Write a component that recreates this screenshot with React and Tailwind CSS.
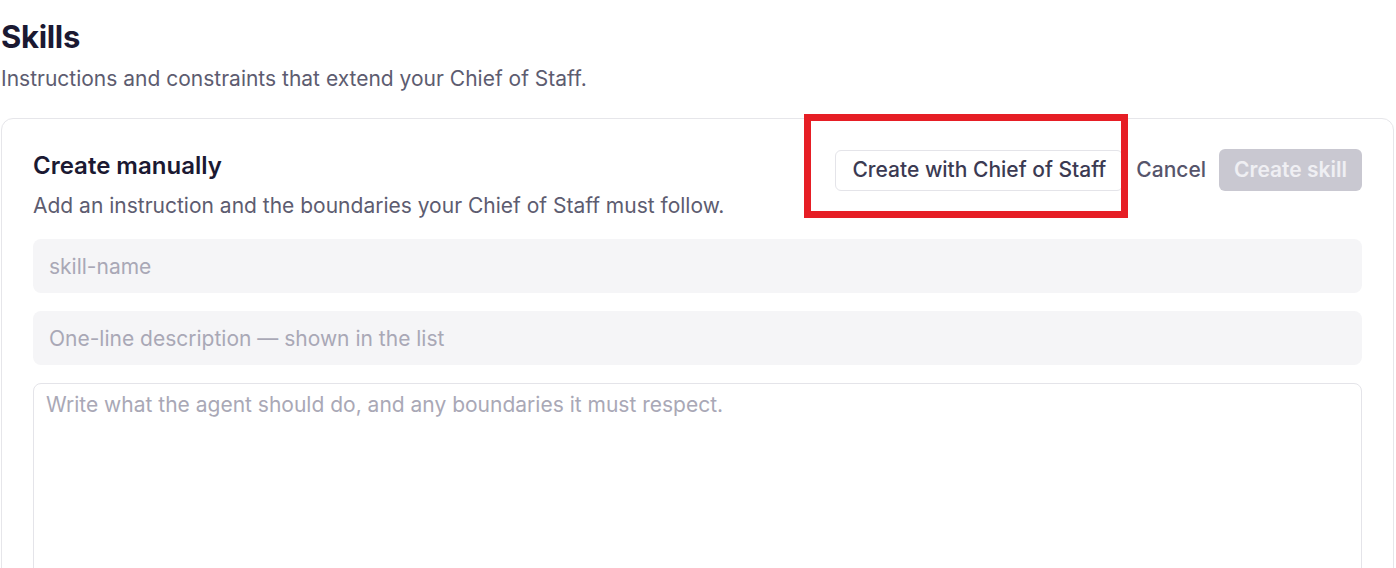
import { useState } from 'react';

export default function App() {
    const [name, setName] = useState('');
    const [description, setDescription] = useState('');
    const [body, setBody] = useState('');

    return (
        <div className="relative min-h-screen bg-white pl-px pr-[2px] pt-[19px] font-['Inter',sans-serif]">
            {/* Page header */}
            <h1 className="text-[31px] leading-9 font-bold text-[#1b1932] tracking-[-0.01em]">Skills</h1>
            <p className="mt-[10px] text-[21px] leading-7 text-[#5d5c70]">
                Instructions and constraints that extend your Chief of Staff.
            </p>

            {/* Create card */}
            <div className="mt-[25px] rounded-xl border border-[#e6e6ea] px-[31px] pt-[31px] pb-10">
                <div className="flex items-start justify-between">
                    <div>
                        <h2 className="text-2xl leading-8 font-semibold text-[#1b1932]">Create manually</h2>
                        <p className="mt-[10px] text-[21px] leading-7 text-[#5d5c70]">
                            Add an instruction and the boundaries your Chief of Staff must follow.
                        </p>
                    </div>
                    <div className="-mt-px flex items-center">
                        <button className="flex h-[41px] items-center rounded-md border border-[#e4e4e9] bg-white px-4 text-[21px] font-medium text-[#3b3a52]">
                            Create with Chief of Staff
                        </button>
                        <button className="ml-[13px] flex h-[41px] items-center text-[21px] font-medium text-[#56556b]">Cancel</button>
                        <button
                            disabled
                            className="ml-[13px] flex h-[42px] items-center rounded-md bg-[#c9c8d1] px-[15px] text-[21px] font-semibold text-[#efeff3]"
                        >
                            Create skill
                        </button>
                    </div>
                </div>

                <div className="mt-[19px] flex flex-col gap-[18px]">
                    <input
                        value={name}
                        onChange={e => setName(e.target.value)}
                        placeholder="skill-name"
                        className="h-[54px] w-full rounded-lg bg-[#f5f5f7] px-4 text-[21px] text-[#1b1932] placeholder:text-[#a9a8b6] outline-none"
                    />
                    <input
                        value={description}
                        onChange={e => setDescription(e.target.value)}
                        placeholder="One-line description — shown in the list"
                        className="h-[54px] w-full rounded-lg bg-[#f5f5f7] px-4 text-[21px] text-[#1b1932] placeholder:text-[#a9a8b6] outline-none"
                    />
                    <textarea
                        value={body}
                        onChange={e => setBody(e.target.value)}
                        placeholder="Write what the agent should do, and any boundaries it must respect."
                        className="h-[260px] w-full resize-none rounded-lg border border-[#e4e4e9] bg-white px-3 pt-[7px] text-[21px] leading-7 text-[#1b1932] placeholder:text-[#a9a8b6] outline-none"
                    />
                </div>
            </div>

            {/* Annotation highlight */}
            <div className="pointer-events-none absolute left-[804px] top-[114px] h-[104px] w-[324px] border-[7px] border-[#e61e25]" />
        </div>
    );
}
